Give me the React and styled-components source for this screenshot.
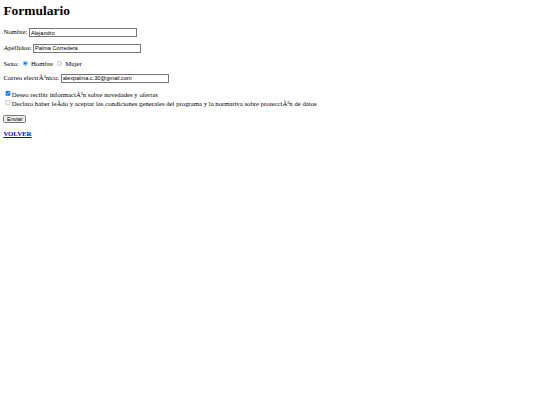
import React from "react";
import styled, { createGlobalStyle } from "styled-components";

const Global = createGlobalStyle`
  html, body { margin: 0; padding: 0; background: #fff; }
`;

const Page = styled.div`
  zoom: 0.421875;
  padding: 8px;
  font-family: "Liberation Serif", "Times New Roman", serif;
  font-size: 16px;
  color: #000;
`;

const Title = styled.h1`
  font-size: 32px;
  font-weight: bold;
  margin: 0 0 21px 0;
`;

const Row = styled.p`
  margin: 16px 0;
`;

const Input = styled.input`
  width: 256px;
  box-sizing: border-box;
  font-family: "Liberation Sans", Arial, sans-serif;
  font-size: 13.33px;
`;

const Checks = styled.div`
  margin: 16px 0;
  line-height: 20px;
`;

const Button = styled.button`
  font-family: "Liberation Sans", Arial, sans-serif;
  font-size: 13.33px;
`;

const Back = styled.a`
  font-weight: bold;
  color: #0000ee;
`;

const App = () => {
  return (
    <>
      <Global />
      <Page>
        <Title>Formulario</Title>
        <form onSubmit={(e) => e.preventDefault()}>
          <Row>
            Nombre: <Input type="text" defaultValue="Alejandro" />
          </Row>
          <Row>
            Apellidos: <Input type="text" defaultValue="Palma Corredera" />
          </Row>
          <Row>
            Sexo: <input type="radio" name="sexo" defaultChecked /> Hombre{" "}
            <input type="radio" name="sexo" /> Mujer
          </Row>
          <Row>
            Correo electrÃ³nico:{" "}
            <Input type="email" defaultValue="alexpalma.c.30@gmail.com" />
          </Row>
          <Checks>
            <input type="checkbox" defaultChecked />
            Deseo recibir informaciÃ³n sobre novedades y ofertas
            <br />
            <input type="checkbox" />
            Declaro haber leÃ­do y aceptar las condiciones generales del programa y la normativa sobre protecciÃ³n de datos
          </Checks>
          <Row>
            <Button type="submit">Enviar</Button>
          </Row>
        </form>
        <Row>
          <Back href="#">VOLVER</Back>
        </Row>
      </Page>
    </>
  );
};

export default App;
